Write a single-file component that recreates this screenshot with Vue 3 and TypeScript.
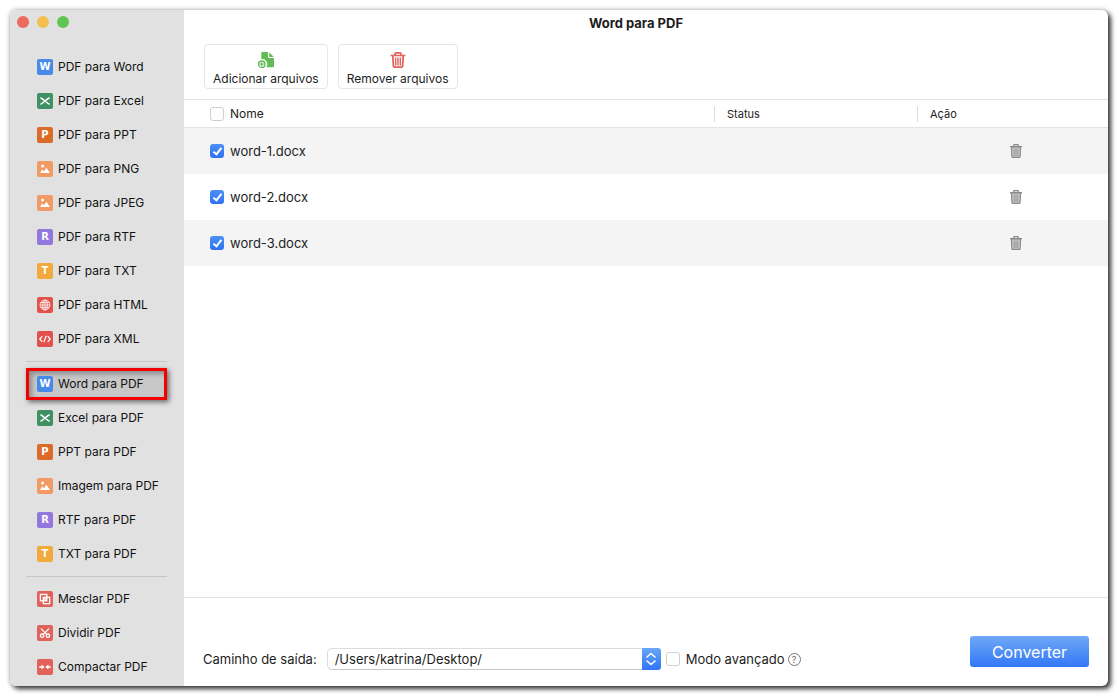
<script setup lang="ts">
import { computed, ref } from 'vue'

type IconKind = 'word' | 'excel' | 'ppt' | 'image' | 'rtf' | 'txt' | 'html' | 'xml' | 'merge' | 'split' | 'compress'

interface Tool {
  label: string
  icon: IconKind
}

interface FileRow {
  name: string
  checked: boolean
}

const groups: Tool[][] = [
  [
    { label: 'PDF para Word', icon: 'word' },
    { label: 'PDF para Excel', icon: 'excel' },
    { label: 'PDF para PPT', icon: 'ppt' },
    { label: 'PDF para PNG', icon: 'image' },
    { label: 'PDF para JPEG', icon: 'image' },
    { label: 'PDF para RTF', icon: 'rtf' },
    { label: 'PDF para TXT', icon: 'txt' },
    { label: 'PDF para HTML', icon: 'html' },
    { label: 'PDF para XML', icon: 'xml' },
  ],
  [
    { label: 'Word para PDF', icon: 'word' },
    { label: 'Excel para PDF', icon: 'excel' },
    { label: 'PPT para PDF', icon: 'ppt' },
    { label: 'Imagem para PDF', icon: 'image' },
    { label: 'RTF para PDF', icon: 'rtf' },
    { label: 'TXT para PDF', icon: 'txt' },
  ],
  [
    { label: 'Mesclar PDF', icon: 'merge' },
    { label: 'Dividir PDF', icon: 'split' },
    { label: 'Compactar PDF', icon: 'compress' },
  ],
]

const letters: Partial<Record<IconKind, string>> = { word: 'W', ppt: 'P', rtf: 'R', txt: 'T' }

const current = ref('Word para PDF')
const files = ref<FileRow[]>([
  { name: 'word-1.docx', checked: true },
  { name: 'word-2.docx', checked: true },
  { name: 'word-3.docx', checked: true },
])
const selectAll = ref(false)
const advanced = ref(false)
const outputPath = ref('/Users/katrina/Desktop/')
const title = computed(() => current.value)

function toggleAll() {
  files.value.forEach((f) => (f.checked = selectAll.value))
}
function removeFile(name: string) {
  files.value = files.value.filter((f) => f.name !== name)
}
function removeChecked() {
  files.value = files.value.filter((f) => !f.checked)
}
</script>

<template>
  <div class="desktop">
    <div class="window">
      <aside class="sidebar">
        <div class="lights">
          <button class="light close" type="button" aria-label="Fechar"></button>
          <button class="light minimize" type="button" aria-label="Minimizar"></button>
          <button class="light expand" type="button" aria-label="Ampliar"></button>
        </div>
        <nav>
          <ul v-for="(group, g) in groups" :key="g" class="group">
            <li v-for="tool in group" :key="tool.label">
              <button
                type="button"
                class="tool"
                :class="{ active: tool.label === current }"
                :aria-current="tool.label === current ? 'page' : undefined"
                @click="current = tool.label"
              >
                <span class="badge" :class="tool.icon" aria-hidden="true">
                  <template v-if="letters[tool.icon]">{{ letters[tool.icon] }}</template>
                  <svg v-else viewBox="0 0 16 16" fill="none" stroke="#fff">
                    <path v-if="tool.icon === 'excel'" stroke-width="1.6" d="M3.4 4.7C6 5.6 10 10.4 12.6 11.3M12.6 4.7C10 5.6 6 10.4 3.4 11.3" />
                    <g v-else-if="tool.icon === 'image'" fill="#fff" stroke="none">
                      <circle cx="5.6" cy="5" r="1.5" />
                      <path d="M3 12L5.2 8.6L7 10.2L9.4 6.8L13 12Z" />
                    </g>
                    <g v-else-if="tool.icon === 'html'" stroke-width=".8">
                      <circle cx="8" cy="8" r="4.9" />
                      <ellipse cx="8" cy="8" rx="2.3" ry="4.9" />
                      <path d="M8 3V13M3.1 8H12.9M3.8 5.6H12.2M3.8 10.4H12.2" />
                    </g>
                    <path v-else-if="tool.icon === 'xml'" stroke-width="1.2" d="M5.3 5.2L2.8 8L5.3 10.8M10.7 5.2L13.2 8L10.7 10.8M9.2 4.8L6.8 11.2" />
                    <g v-else-if="tool.icon === 'merge'" stroke-width="1.3">
                      <rect x="3.4" y="3.4" width="6.4" height="6.4" />
                      <rect x="6.3" y="6.3" width="6.4" height="6.4" />
                      <rect x="6.5" y="6.500" width="3.3" height="3.3" fill="#fff" stroke="none" opacity=".75" />
                    </g>
                    <g v-else-if="tool.icon === 'split'" stroke-width="1.3">
                      <path d="M4 3.600L9.700 9.4M12 3.600L6.300 9.4" />
                      <circle cx="5.1" cy="10.7" r="1.7" />
                      <circle cx="10.9" cy="10.7" r="1.7" />
                    </g>
                    <g v-else stroke-width="1.3">
                      <path d="M2.2 8H5.500M13.800 8H10.500" />
                      <path fill="#fff" stroke="none" d="M4.600 5.4L7.600 8L4.600 10.6ZM11.4 5.4L8.4 8L11.4 10.6Z" />
                    </g>
                  </svg>
                </span>
                {{ tool.label }}
              </button>
            </li>
          </ul>
        </nav>
      </aside>

      <main class="main">
        <h1 class="title">{{ title }}</h1>

        <div class="toolbar">
          <button type="button" class="action">
            <svg class="action-icon" viewBox="0 0 18 18" aria-hidden="true">
              <path fill="#62bb57" d="M5.500 1H11V5.4Q11 7 12.600 7H17V15Q17 16.200 15.800 16.200H9.200A5 5 0 0 0 4.300 8.200V2.200Q4.300 1 5.500 1Z" />
              <path fill="#62bb57" d="M12.100 1.200L16.800 5.900H12.800Q12.100 5.900 12.100 5.200Z" />
              <circle cx="4.800" cy="13.200" r="3.200" fill="none" stroke="#62bb57" stroke-width="1.400" />
              <path stroke="#62bb57" stroke-width="1.200" d="M2.900 13.200H6.700M4.800 11.300V15.100" />
            </svg>
            Adicionar arquivos
          </button>
          <button type="button" class="action" @click="removeChecked">
            <svg class="action-icon" viewBox="0 0 18 18" fill="none" stroke="#e0625a" aria-hidden="true">
              <path stroke-width="1.700" d="M1.600 4.500H16.400M6 4.200V2.900Q6 1.800 7 1.800H11Q12 1.800 12 2.900V4.200" />
              <path stroke-width="1.800" d="M3.800 4.800L4.400 15Q4.500 16.200 5.600 16.200H12.400Q13.500 16.200 13.600 15L14.200 4.800" />
              <path stroke-width="1.400" d="M6.700 6.500V14.500M9 6.500V14.500M11.300 6.500V14.500" />
            </svg>
            Remover arquivos
          </button>
        </div>

        <div class="list">
          <table class="files">
            <colgroup>
              <col />
              <col class="col-status" />
              <col class="col-action" />
            </colgroup>
            <thead>
              <tr>
                <th scope="col">
                  <label class="check"><input v-model="selectAll" type="checkbox" @change="toggleAll" />Nome</label>
                </th>
                <th scope="col"><span class="head-cell">Status</span></th>
                <th scope="col"><span class="head-cell">Ação</span></th>
              </tr>
            </thead>
            <tbody>
              <tr v-for="file in files" :key="file.name">
                <td>
                  <label class="check"><input v-model="file.checked" type="checkbox" />{{ file.name }}</label>
                </td>
                <td></td>
                <td>
                  <button type="button" class="trash" :aria-label="`Remover ${file.name}`" @click="removeFile(file.name)">
                    <svg viewBox="0 0 14 16" fill="none" stroke="#8b8b8b">
                      <path fill="#c9c9c9" stroke-width="1.2" d="M2.400 4L2.900 13.600Q3 14.400 3.700 14.400H10.300Q11 14.400 11.100 13.600L11.600 4Z" />
                      <path stroke-width="1.3" d="M1 3.700H13M4.500 3.500L5 1.600H9L9.500 3.500" />
                      <path stroke-width=".8" d="M5.200 5.500V13M7 5.500V13M8.800 5.500V13" />
                    </svg>
                  </button>
                </td>
              </tr>
            </tbody>
          </table>
        </div>

        <footer class="footer">
          <div class="output">
            <label for="output-path">Caminho de saída:</label>
            <div class="combo">
              <select id="output-path" v-model="outputPath">
                <option>/Users/katrina/Desktop/</option>
              </select>
              <span class="stepper" aria-hidden="true">
                <svg viewBox="0 0 10 14" fill="none" stroke="#fff" stroke-width="1.5" stroke-linecap="round" stroke-linejoin="round">
                  <path d="M1 5L5 1.500L9 5M1 9L5 12.500L9 9" />
                </svg>
              </span>
            </div>
            <label class="check"><input v-model="advanced" type="checkbox" />Modo avançado</label>
            <button type="button" class="help" aria-label="Ajuda">?</button>
          </div>
          <button type="button" class="convert">Converter</button>
        </footer>
      </main>
    </div>
  </div>
</template>

<style>
body {
  margin: 0;
  background: #fff;
}
</style>

<style scoped>
.desktop {
  box-sizing: border-box;
  min-height: 100vh;
  padding: 10px 11px 11px 10px;
  display: grid;
  font-family: Inter, "Liberation Sans", sans-serif;
  font-size: 13px;
  line-height: 16px;
  color: #1d1d1d;
}
button,
select {
  font: inherit;
  color: inherit;
  margin: 0;
}
.window {
  display: grid;
  grid-template-columns: 174px 1fr;
  border-radius: 6px;
  overflow: hidden;
  background: #fff;
  box-shadow: 0 0 5px rgba(0, 0, 0, 0.3), 3px 3px 5px rgba(0, 0, 0, 0.75);
}
.sidebar {
  background: #e1e1e1;
}
.lights {
  display: flex;
  gap: 8px;
  padding: 6px 7px 22px;
}
.light {
  width: 12px;
  height: 12px;
  padding: 0;
  border: 0;
  border-radius: 50%;
}
.close {
  background: #ec6a5e;
}
.minimize {
  background: #f4bf4f;
}
.expand {
  background: #61c554;
}
.group {
  list-style: none;
  margin: 0 17px 0 16px;
  padding: 0;
}
.group + .group {
  margin-top: 5px;
  padding-top: 5px;
  border-top: 1px solid #c6c6c6;
}
.group li {
  padding: 1px 0;
}
.tool {
  box-sizing: border-box;
  display: flex;
  align-items: center;
  gap: 5px;
  width: 100%;
  height: 32px;
  padding: 0 8px;
  border: 3px solid transparent;
  background: none;
  color: #111;
  font-size: 12px;
  white-space: nowrap;
  text-align: left;
}
.tool.active {
  border-color: #f40000;
  background: #c8c8c8;
  box-shadow: 2px 2px 5px rgba(0, 0, 0, 0.55), inset 3px 3px 5px rgba(0, 0, 0, 0.3);
}
.badge {
  flex: none;
  width: 16px;
  height: 16px;
  border-radius: 2px;
  color: #fff;
  font-family: "DejaVu Sans", sans-serif;
  font-size: 10px;
  font-weight: 700;
  line-height: 16px;
  text-align: center;
}
.badge svg {
  display: block;
}
.word {
  background: #488ae8;
}
.excel {
  background: #3f9163;
}
.ppt {
  background: #dc6b28;
}
.image {
  background: #f19a64;
}
.rtf {
  background: #9277dc;
}
.txt {
  background: #f2aa3c;
}
.html,
.xml {
  background: #e2524c;
}
.merge,
.split,
.compress {
  background: #e0625a;
}
.main {
  display: flex;
  flex-direction: column;
  min-width: 0;
}
.title {
  margin: 0;
  padding: 4px 20px 0 0;
  font-size: 13px;
  line-height: 18px;
  font-weight: 700;
  text-align: center;
}
.toolbar {
  display: flex;
  gap: 10px;
  padding: 12px 20px 10px;
  border-bottom: 1px solid #e3e3e3;
}
.action {
  box-sizing: border-box;
  display: flex;
  flex-direction: column;
  align-items: center;
  height: 45px;
  gap: 2px;
  padding: 6px 8px 0;
  border: 1px solid #e6e6e6;
  border-radius: 4px;
  background: #fff;
  font-size: 12px;
}
.action-icon {
  width: 18px;
  height: 18px;
}
.list {
  flex: 1;
  border-bottom: 1px solid #e3e3e3;
}
.files {
  width: 100%;
  table-layout: fixed;
  border-collapse: collapse;
}
.col-status {
  width: 203px;
}
.col-action {
  width: 191px;
}
.files th {
  height: 27px;
  padding: 0;
  border-bottom: 1px solid #e3e3e3;
  font-size: 12px;
  font-weight: 400;
  text-align: left;
}
.files td {
  height: 46px;
  padding: 0;
}
.files tbody tr:nth-child(odd) {
  background: #f4f4f4;
}
.head-cell {
  display: block;
  padding-left: 12px;
  border-left: 1px solid #dcdcdc;
  font-size: 11px;
}
.check {
  display: flex;
  align-items: center;
  gap: 6px;
}
.files .check {
  padding-left: 26px;
}
.check input {
  appearance: none;
  box-sizing: border-box;
  flex: none;
  display: grid;
  place-items: center;
  width: 14px;
  height: 14px;
  margin: 0;
  border: 1px solid #cfcfcf;
  border-radius: 3px;
  background: #fff;
}
.check input:checked {
  border: 0;
  background: linear-gradient(#4a90f7, #2f72f2);
}
.check input:checked::after {
  content: "";
  width: 3px;
  height: 7px;
  margin-bottom: 2px;
  border: solid #fff;
  border-width: 0 2px 2px 0;
  transform: rotate(38deg);
}
.trash {
  display: block;
  width: 14px;
  height: 16px;
  margin: 0 auto;
  padding: 0;
  border: 0;
  background: none;
}
.files td:last-child {
  padding-left: 7px;
}
.trash svg {
  display: block;
}
.footer {
  display: flex;
  align-items: flex-end;
  justify-content: space-between;
  padding: 38px 19px 16px;
}
.output {
  display: flex;
  align-items: center;
}
.combo {
  display: grid;
  width: 334px;
  margin: 0 5px 0 10px;
}
.combo select,
.stepper {
  grid-area: 1 / 1;
}
.combo select {
  appearance: none;
  box-sizing: border-box;
  width: 100%;
  height: 22px;
  padding: 0 26px 0 7px;
  border: 1px solid #dcdcdc;
  border-bottom-color: #c8c8c8;
  border-radius: 5px;
  background: #fff;
}
.stepper {
  justify-self: end;
  display: grid;
  place-items: center;
  width: 19px;
  height: 22px;
  border-radius: 0 3px 3px 0;
  background: linear-gradient(#6aa7f7, #2f74f5);
  pointer-events: none;
}
.stepper svg {
  width: 10px;
  height: 14px;
}
.help {
  box-sizing: border-box;
  width: 13px;
  height: 13px;
  margin-left: 3px;
  padding: 0;
  border: 1px solid #777;
  border-radius: 50%;
  background: none;
  color: #666;
  font-size: 9px;
  line-height: 11px;
}
.convert {
  width: 119px;
  height: 31px;
  margin-bottom: 3px;
  padding: 0;
  border: 0;
  border-radius: 3px;
  background: linear-gradient(#6fa9f8, #3377f6);
  color: #fff;
  font-size: 16px;
}
</style>
